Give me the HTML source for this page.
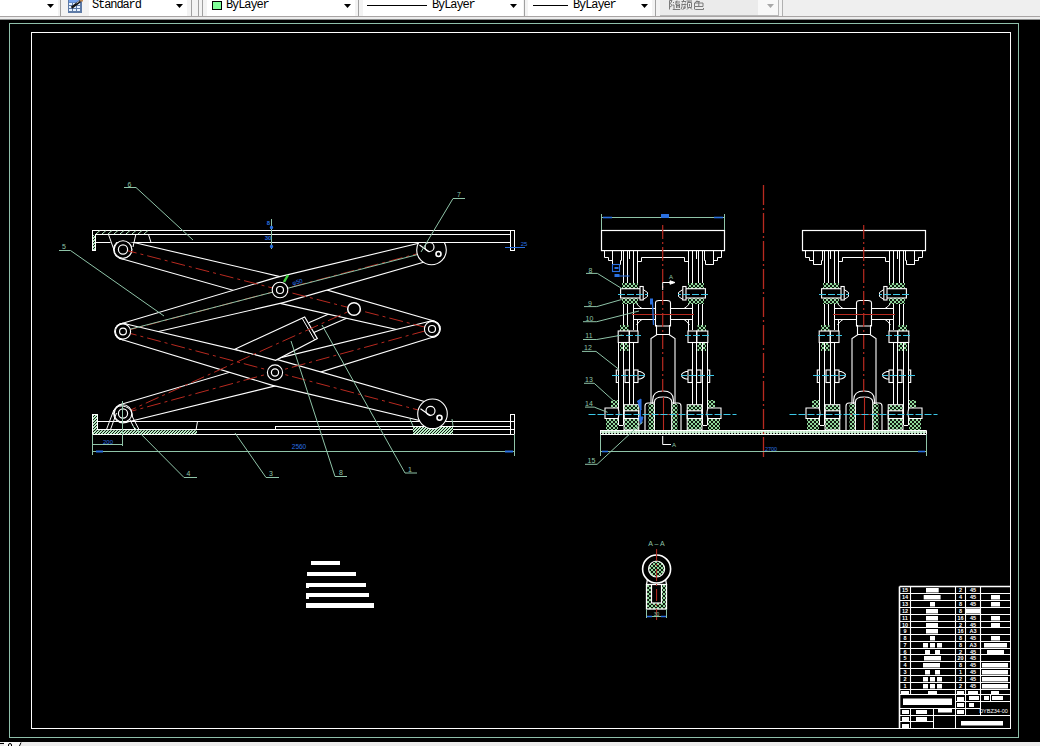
<!DOCTYPE html>
<html><head><meta charset="utf-8">
<style>
html,body{margin:0;padding:0;width:1040px;height:746px;overflow:hidden;background:#000;}
svg{position:absolute;left:0;top:0;}
</style></head><body>
<svg width="1040" height="746" viewBox="0 0 1040 746">
<defs>
<clipPath id="cpT"><rect x="0" y="243" width="1040" height="400"/></clipPath>
<pattern id="hp" width="4" height="4" patternUnits="userSpaceOnUse"><rect width="4" height="4" fill="#8fd89a"/><path d="M0,0 L4,4 M4,0 L0,4" stroke="#000" stroke-width="0.9"/></pattern>
<pattern id="hw" width="3" height="3" patternUnits="userSpaceOnUse"><rect width="3" height="3" fill="#b8ecc4"/><path d="M0,3 L3,0" stroke="#000" stroke-width="0.9"/></pattern>
<pattern id="hb" width="3" height="3" patternUnits="userSpaceOnUse"><rect width="3" height="3" fill="#d0f2d6"/><circle cx="1.5" cy="1.5" r="0.7" fill="#000"/></pattern>
<linearGradient id="tbg" x1="0" y1="0" x2="0" y2="1"><stop offset="0" stop-color="#fafafa"/><stop offset="1" stop-color="#f2f2f2"/></linearGradient>
</defs>
<rect x="0" y="0" width="1040" height="20" fill="#f3f3f3"/>
<g shape-rendering="crispEdges">
<rect x="0" y="16" width="1040" height="1" fill="#a8a4a4"/>
<rect x="0" y="17" width="1040" height="2" fill="#ececec"/>
<rect x="0" y="19" width="1040" height="1" fill="#8c8e8e"/>
<rect x="0" y="0" width="58" height="16" fill="#fff"/>
<rect x="60" y="0" width="1" height="16" fill="#a0a0a0"/>
<rect x="89" y="0" width="98" height="16" fill="#fff"/>
<rect x="191" y="0" width="1" height="16" fill="#a0a0a0"/>
<rect x="198" y="0" width="1" height="16" fill="#a0a0a0"/>
<rect x="202" y="0" width="1" height="16" fill="#a0a0a0"/>
<rect x="207" y="0" width="148" height="16" fill="#fff"/>
<rect x="358" y="0" width="1" height="16" fill="#a0a0a0"/>
<rect x="363" y="0" width="160" height="16" fill="#fff"/>
<rect x="524" y="0" width="1" height="16" fill="#a0a0a0"/>
<rect x="528" y="0" width="124" height="16" fill="#fff"/>
<rect x="655" y="0" width="1" height="16" fill="#a0a0a0"/>
<rect x="660" y="0" width="119" height="15" fill="#ebebeb"/>
<rect x="758" y="0" width="20" height="15" fill="#f8f8f8"/>
<rect x="778" y="0" width="1" height="15" fill="#b8b8b8"/>
<rect x="660" y="15" width="119" height="1" fill="#b8b8b8"/>
<rect x="782" y="0" width="1" height="16" fill="#b0b0b0"/>
<rect x="783" y="0" width="257" height="16" fill="#efefef"/>
<rect x="212" y="1" width="10" height="9" fill="#000"/>
<rect x="213" y="2" width="8" height="7" fill="#80ff99"/>
<rect x="367" y="5" width="60" height="1" fill="#000"/>
<rect x="533" y="5" width="35" height="1" fill="#000"/>
</g>
<g fill="#000">
<path d="M47,4 H54 L50.5,8 Z"/><path d="M176,4 H183 L179.5,8 Z"/><path d="M344,4 H351 L347.5,8 Z"/><path d="M510,4 H517 L513.5,8 Z"/><path d="M641,4 H648 L644.5,8 Z"/>
</g>
<path d="M767,4 H774 L770.5,8 Z" fill="#a8a8a8"/>
<g font-family="Liberation Mono, monospace" font-size="12" fill="#000" letter-spacing="-1.1">
<text x="92" y="8">Standard</text>
<text x="226" y="8">ByLayer</text>
<text x="432" y="8">ByLayer</text>
<text x="573" y="8">ByLayer</text>
</g>
<g stroke="#7a7a7a" stroke-width="1" fill="none">
<path d="M669.5,0.5 V9.5 M669.5,0.5 H672 L670.5,3.5 L672,5.5 L670,7 M673,2 L674,3 M672.5,5 H674 V8.5 L673,9.5 H680 M675,2 H680 M677,0.5 L675.5,4.5 M676.5,4 V8 M676.5,4 H679.5 V8 M676.5,5.5 H679.5 M676.5,7 H679.5"/>
<path d="M683.5,0 V1.5 M681.5,1.5 H686 M682,3.5 L682.5,2.5 M685.5,2.5 L685,3.5 M681.5,4.5 H686.5 M682,4.5 V6.5 L681,9.5 M685.5,5.5 L683.5,7 M685.5,6.5 L683,8.5 M686,7.5 L682.5,9.5 M686.5,1 H692 M689,1 L688.5,2.5 M687.5,2.5 H691.5 V7.5 H687.5 Z M689.5,4 V6.5 M688.5,8 L687,9.5 M690.5,8 L692,9.5"/>
<path d="M697,0.5 L695,3 M696,1.5 H699.5 L698.5,3 M694.5,3 H703 V6.5 H694.5 Z M698.8,3 V6.5 M694.5,6.5 V9 Q694.5,9.5 695.5,9.5 H703.5 V8"/>
</g>
<!-- icon -->
<rect x="68" y="0" width="14" height="13" fill="#5d7aa6"/>
<rect x="69" y="0" width="12" height="2.5" fill="#74a2ee"/>
<g fill="#e6f2ff">
<rect x="69" y="3" width="3" height="2"/><rect x="73" y="3" width="3" height="2"/><rect x="77" y="3" width="3" height="2"/>
<rect x="69" y="6" width="3" height="2"/><rect x="73" y="6" width="3" height="2"/><rect x="77" y="6" width="3" height="2"/>
<rect x="69" y="9" width="3" height="2"/><rect x="73" y="9" width="3" height="2"/><rect x="77" y="9" width="3" height="2"/>
</g>
<path d="M71.5,7.8 L80.5,1" stroke="#151515" stroke-width="2.4"/>
<path d="M76.5,3.2 L79.5,1" stroke="#e0e0e0" stroke-width="0.8"/>
<rect x="80" y="0" width="3" height="1.5" fill="#c08850"/>
<rect x="0" y="742" width="1040" height="4" fill="#ececec"/>
<rect x="4" y="742" width="17" height="4" fill="#fafafa"/>
<rect x="0" y="743" width="4" height="1" fill="#000"/>
<path d="M8.5,746 V745 Q8.5,743.5 10,743.5 Q11.5,743.5 11.5,745 V746" stroke="#000" stroke-width="1" fill="none"/>
<path d="M19.5,746 L21,742.5" stroke="#000" stroke-width="1"/>
<g shape-rendering="crispEdges">
<rect x="9.5" y="23.5" width="1009" height="714" fill="none" stroke="#8fbfaa" stroke-width="1"/>
<rect x="31.5" y="32.5" width="979" height="696" fill="none" stroke="#fff" stroke-width="1"/>
</g>
<line x1="308.7" y1="322.8" x2="351.7" y2="304.0" stroke="#ffffff" stroke-width="1.1" />
<line x1="313.3" y1="332.8" x2="356.3" y2="314.0" stroke="#ffffff" stroke-width="1.1" />
<polygon points="120.8,258.0 276.9,302.1 430.1,336.4 433.9,321.6 283.1,277.9 125.2,241.0" stroke="#fff" stroke-width="2.2" fill="none" stroke-linejoin="round"/>
<circle cx="123" cy="249.5" r="8.8" stroke="#fff" stroke-width="2.2" fill="none"/>
<circle cx="432" cy="329" r="7.6" stroke="#fff" stroke-width="2.2" fill="none"/>
<polygon points="120.8,258.0 276.9,302.1 430.1,336.4 433.9,321.6 283.1,277.9 125.2,241.0" fill="#000"/>
<circle cx="123" cy="249.5" r="8.8" fill="#000"/>
<circle cx="432" cy="329" r="7.6" fill="#000"/>
<polygon points="125.3,422.0 278.3,384.6 434.0,336.3 430.0,321.7 271.7,360.4 120.7,405.0" stroke="#fff" stroke-width="2.2" fill="none" stroke-linejoin="round"/>
<circle cx="123" cy="413.5" r="8.8" stroke="#fff" stroke-width="2.2" fill="none"/>
<circle cx="432" cy="329" r="7.6" stroke="#fff" stroke-width="2.2" fill="none"/>
<polygon points="125.3,422.0 278.3,384.6 434.0,336.3 430.0,321.7 271.7,360.4 120.7,405.0" fill="#000"/>
<circle cx="123" cy="413.5" r="8.8" fill="#000"/>
<circle cx="432" cy="329" r="7.6" fill="#000"/>
<polygon points="124.9,338.8 283.2,302.1 433.8,258.7 429.2,241.3 276.8,277.9 121.1,324.2" stroke="#fff" stroke-width="2.2" fill="none" stroke-linejoin="round"/>
<circle cx="123" cy="331.5" r="7.6" stroke="#fff" stroke-width="2.2" fill="none"/>
<circle cx="431.5" cy="250" r="9" stroke="#fff" stroke-width="2.2" fill="none"/>
<polygon points="124.9,338.8 283.2,302.1 433.8,258.7 429.2,241.3 276.8,277.9 121.1,324.2" fill="#000"/>
<circle cx="123" cy="331.5" r="7.6" fill="#000"/>
<circle cx="431.5" cy="250" r="9" fill="#000"/>
<polygon points="121.0,338.8 271.8,384.6 430.2,422.5 434.8,405.1 278.2,360.4 125.0,324.2" stroke="#fff" stroke-width="2.2" fill="none" stroke-linejoin="round"/>
<circle cx="123" cy="331.5" r="7.6" stroke="#fff" stroke-width="2.2" fill="none"/>
<circle cx="432.5" cy="413.8" r="9" stroke="#fff" stroke-width="2.2" fill="none"/>
<polygon points="121.0,338.8 271.8,384.6 430.2,422.5 434.8,405.1 278.2,360.4 125.0,324.2" fill="#000"/>
<circle cx="123" cy="331.5" r="7.6" fill="#000"/>
<circle cx="432.5" cy="413.8" r="9" fill="#000"/>
<line x1="123.0" y1="249.5" x2="432.0" y2="329.0" stroke="#b82a20" stroke-width="1.0" stroke-dasharray="14,4,3,4"/>
<line x1="123.0" y1="413.5" x2="432.0" y2="329.0" stroke="#b82a20" stroke-width="1.0" stroke-dasharray="14,4,3,4"/>
<line x1="123.0" y1="331.5" x2="431.5" y2="250.0" stroke="#b82a20" stroke-width="1.0" stroke-dasharray="14,4,3,4"/>
<line x1="123.0" y1="331.5" x2="432.5" y2="413.8" stroke="#b82a20" stroke-width="1.0" stroke-dasharray="14,4,3,4"/>
<line x1="129.0" y1="329.5" x2="423.5" y2="253.0" stroke="#8fc4a8" stroke-width="1" />
<polygon points="234.8,349.2 304.7,316.9 317.4,338.6 275.6,360.3" fill="#000" stroke="#fff" stroke-width="1.1"/>
<line x1="302.2" y1="318.3" x2="314.6" y2="339.8" stroke="#ffffff" stroke-width="1" />
<line x1="123.0" y1="413.5" x2="354.0" y2="309.0" stroke="#b82a20" stroke-width="1.0" stroke-dasharray="14,4,3,4"/>
<circle cx="123" cy="249.5" r="8.8" stroke="#fff" stroke-width="1.1" fill="#000"/>
<circle cx="123.0" cy="249.5" r="4.6" stroke="#ffffff" stroke-width="1.2" fill="none"/>
<circle cx="123" cy="413.5" r="8.8" stroke="#fff" stroke-width="1.1" fill="#000"/>
<circle cx="123.0" cy="413.5" r="4.6" stroke="#ffffff" stroke-width="1.2" fill="none"/>
<circle cx="280" cy="290" r="7.8" stroke="#fff" stroke-width="1.1" fill="#000"/>
<circle cx="280.0" cy="290.0" r="3.5" stroke="#ffffff" stroke-width="1.2" fill="none"/>
<circle cx="275" cy="372.5" r="7.6" stroke="#fff" stroke-width="1.1" fill="#000"/>
<circle cx="275.0" cy="372.5" r="3.6" stroke="#ffffff" stroke-width="1.2" fill="none"/>
<circle cx="123" cy="331.5" r="7.6" stroke="#fff" stroke-width="1.1" fill="#000"/>
<circle cx="123.0" cy="331.5" r="3.4" stroke="#ffffff" stroke-width="1.2" fill="none"/>
<circle cx="432" cy="329" r="7.6" stroke="#fff" stroke-width="1.1" fill="#000"/>
<circle cx="432.0" cy="329.0" r="3.5" stroke="#ffffff" stroke-width="1.2" fill="none"/>
<circle cx="354.0" cy="309.0" r="6.3" stroke="#ffffff" stroke-width="1.5" fill="#000"/>
<rect x="96.0" y="231.0" width="414.0" height="11.0" fill="#000"/>
<line x1="92.0" y1="230.5" x2="514.5" y2="230.5" stroke="#ffffff" stroke-width="1" />
<line x1="95.5" y1="234.5" x2="510.0" y2="234.5" stroke="#ffffff" stroke-width="1" />
<line x1="95.5" y1="242.5" x2="110.5" y2="242.5" stroke="#ffffff" stroke-width="1" />
<line x1="134.0" y1="242.5" x2="510.0" y2="242.5" stroke="#ffffff" stroke-width="1" />
<line x1="92.5" y1="230.0" x2="92.5" y2="250.5" stroke="#ffffff" stroke-width="1" />
<line x1="95.5" y1="234.0" x2="95.5" y2="250.5" stroke="#ffffff" stroke-width="1" />
<line x1="92.0" y1="250.5" x2="96.0" y2="250.5" stroke="#ffffff" stroke-width="1" />
<line x1="510.5" y1="230.0" x2="510.5" y2="250.5" stroke="#ffffff" stroke-width="1" />
<line x1="514.5" y1="230.0" x2="514.5" y2="250.5" stroke="#ffffff" stroke-width="1" />
<line x1="510.0" y1="250.5" x2="515.0" y2="250.5" stroke="#ffffff" stroke-width="1" />
<path d="M108.5,234.5 L114,250 M135.8,234.5 L133,247 M148.5,234.5 L151,242.5" stroke="#ffffff" stroke-width="1" fill="none" />
<line x1="96.0" y1="234.0" x2="100.0" y2="230.5" stroke="#b8ecc4" stroke-width="1" />
<line x1="102.0" y1="234.0" x2="106.0" y2="230.5" stroke="#b8ecc4" stroke-width="1" />
<line x1="108.0" y1="234.0" x2="112.0" y2="230.5" stroke="#b8ecc4" stroke-width="1" />
<line x1="114.0" y1="234.0" x2="118.0" y2="230.5" stroke="#b8ecc4" stroke-width="1" />
<line x1="120.0" y1="234.0" x2="124.0" y2="230.5" stroke="#b8ecc4" stroke-width="1" />
<line x1="126.0" y1="234.0" x2="130.0" y2="230.5" stroke="#b8ecc4" stroke-width="1" />
<line x1="132.0" y1="234.0" x2="136.0" y2="230.5" stroke="#b8ecc4" stroke-width="1" />
<line x1="138.0" y1="234.0" x2="142.0" y2="230.5" stroke="#b8ecc4" stroke-width="1" />
<line x1="144.0" y1="234.0" x2="148.0" y2="230.5" stroke="#b8ecc4" stroke-width="1" />
<rect x="93" y="235" width="2" height="15" fill="url(#hw)"/>
<circle cx="123.0" cy="249.5" r="8.8" stroke="#ffffff" stroke-width="1.1" fill="#000"/>
<circle cx="123.0" cy="249.5" r="4.6" stroke="#ffffff" stroke-width="1.2" fill="none"/>
<line x1="128.0" y1="250.8" x2="133.0" y2="252.1" stroke="#b82a20" stroke-width="1.0" />
<line x1="97.0" y1="421.5" x2="514.5" y2="421.5" stroke="#ffffff" stroke-width="1" />
<line x1="275.0" y1="426.5" x2="510.0" y2="426.5" stroke="#ffffff" stroke-width="1" />
<line x1="97.0" y1="429.5" x2="514.5" y2="429.5" stroke="#ffffff" stroke-width="1" />
<line x1="92.0" y1="434.5" x2="514.5" y2="434.5" stroke="#ffffff" stroke-width="1" />
<line x1="92.5" y1="414.0" x2="92.5" y2="434.5" stroke="#ffffff" stroke-width="1" />
<line x1="97.5" y1="414.0" x2="97.5" y2="430.0" stroke="#ffffff" stroke-width="1" />
<line x1="92.0" y1="414.5" x2="97.5" y2="414.5" stroke="#ffffff" stroke-width="1" />
<line x1="510.5" y1="414.5" x2="510.5" y2="434.5" stroke="#ffffff" stroke-width="1" />
<line x1="514.5" y1="414.5" x2="514.5" y2="434.5" stroke="#ffffff" stroke-width="1" />
<line x1="510.0" y1="414.5" x2="515.0" y2="414.5" stroke="#ffffff" stroke-width="1" />
<line x1="275.5" y1="426.5" x2="275.5" y2="430.0" stroke="#ffffff" stroke-width="1" />
<path d="M106.5,429.5 L113.8,410 A10.5,10.5 0 0 1 132.5,417 L139,429.5 M110.5,429.5 L116.5,413 M135,429.5 L129.5,419 M197.5,421.5 L196,430" stroke="#ffffff" stroke-width="1" fill="none" />
<rect x="93" y="430.2" width="104" height="3.8" fill="url(#hw)"/>
<rect x="413" y="427" width="40" height="7" fill="url(#hw)"/>
<rect x="93" y="415" width="4" height="15" fill="url(#hw)"/>
<path d="M413,426 L410,419 M453,426 L452,419" stroke="#8fc4a8" stroke-width="1" fill="none" />
<g clip-path="url(#cpT)">
<circle cx="431.5" cy="250" r="14.8" stroke="#fff" stroke-width="1.1" fill="#000"/>
</g>
<circle cx="429.5" cy="247.0" r="4.5" stroke="#ffffff" stroke-width="1.2" fill="none"/>
<circle cx="438.5" cy="254.0" r="2.5" stroke="#ffffff" stroke-width="1.6" fill="none"/>
<line x1="419.5" y1="245.0" x2="429.5" y2="252.0" stroke="#ffffff" stroke-width="1.2" />
<g>
<circle cx="432.5" cy="413.8" r="14.8" stroke="#fff" stroke-width="1.1" fill="#000"/>
</g>
<circle cx="430.5" cy="410.8" r="4.5" stroke="#ffffff" stroke-width="1.2" fill="none"/>
<circle cx="439.5" cy="417.8" r="2.5" stroke="#ffffff" stroke-width="1.6" fill="none"/>
<line x1="420.5" y1="408.8" x2="430.5" y2="415.8" stroke="#ffffff" stroke-width="1.2" />
<line x1="92.0" y1="451.5" x2="514.5" y2="451.5" stroke="#8fc4a8" stroke-width="1" />
<line x1="92.5" y1="434.5" x2="92.5" y2="455.0" stroke="#8fc4a8" stroke-width="1" />
<line x1="514.5" y1="434.5" x2="514.5" y2="456.0" stroke="#8fc4a8" stroke-width="1" />
<line x1="92.0" y1="444.5" x2="122.5" y2="444.5" stroke="#8fc4a8" stroke-width="1" />
<line x1="122.5" y1="401.0" x2="122.5" y2="446.0" stroke="#8fc4a8" stroke-width="1" />
<line x1="96.0" y1="451.5" x2="103.0" y2="451.5" stroke="#2a70e0" stroke-width="2" />
<line x1="505.0" y1="451.5" x2="513.0" y2="451.5" stroke="#2a70e0" stroke-width="2" />
<text x="299.0" y="449.0" fill="#2a70e0" font-size="6.5" text-anchor="middle" font-family="Liberation Sans, sans-serif" >2560</text>
<text x="108.0" y="443.5" fill="#2a70e0" font-size="6" text-anchor="middle" font-family="Liberation Sans, sans-serif" >200</text>
<line x1="271.5" y1="219.0" x2="271.5" y2="249.0" stroke="#8fc4a8" stroke-width="1" />
<circle cx="271.5" cy="227.5" r="1.0" stroke="#2a70e0" stroke-width="1.5" fill="#2a70e0"/>
<circle cx="271.5" cy="246.5" r="1.0" stroke="#2a70e0" stroke-width="1.5" fill="#2a70e0"/>
<text x="268.5" y="225.0" fill="#2a70e0" font-size="6" text-anchor="middle" font-family="Liberation Sans, sans-serif" font-weight="bold">8</text>
<text x="268.0" y="240.0" fill="#2a70e0" font-size="6" text-anchor="middle" font-family="Liberation Sans, sans-serif" font-weight="bold">30</text>
<line x1="505.0" y1="247.5" x2="525.0" y2="247.5" stroke="#2a70e0" stroke-width="1" />
<text x="524.0" y="246.0" fill="#2a70e0" font-size="6" text-anchor="middle" font-family="Liberation Sans, sans-serif" >25</text>
<line x1="284.0" y1="282.0" x2="288.0" y2="275.0" stroke="#40d040" stroke-width="2.5" />
<text x="298.0" y="284.0" fill="#2a70e0" font-size="6" text-anchor="middle" font-family="Liberation Sans, sans-serif" transform="rotate(-15 298 284)">φ50</text>
<path d="M193.0,240.0 L136.0,187.5 L124.0,187.5" stroke="#8fc4a8" stroke-width="1" fill="none" />
<text x="129.5" y="186.5" fill="#8fc4a8" font-size="7" text-anchor="middle" font-family="Liberation Sans, sans-serif" >6</text>
<path d="M164.0,316.0 L70.5,250.5 L59.0,250.5" stroke="#8fc4a8" stroke-width="1" fill="none" />
<text x="64.0" y="248.5" fill="#8fc4a8" font-size="7" text-anchor="middle" font-family="Liberation Sans, sans-serif" >5</text>
<path d="M421.0,252.0 L453.0,198.5 L465.0,198.5" stroke="#8fc4a8" stroke-width="1" fill="none" />
<text x="459.0" y="196.5" fill="#8fc4a8" font-size="7" text-anchor="middle" font-family="Liberation Sans, sans-serif" >7</text>
<path d="M132.0,425.0 L184.0,477.5 L197.0,477.5" stroke="#8fc4a8" stroke-width="1" fill="none" />
<text x="188.5" y="476.0" fill="#8fc4a8" font-size="7" text-anchor="middle" font-family="Liberation Sans, sans-serif" >4</text>
<path d="M235.0,433.0 L266.0,477.5 L279.0,477.5" stroke="#8fc4a8" stroke-width="1" fill="none" />
<text x="271.0" y="476.0" fill="#8fc4a8" font-size="7" text-anchor="middle" font-family="Liberation Sans, sans-serif" >3</text>
<path d="M291.0,341.0 L335.0,476.5 L347.0,476.5" stroke="#8fc4a8" stroke-width="1" fill="none" />
<text x="341.0" y="474.5" fill="#8fc4a8" font-size="7" text-anchor="middle" font-family="Liberation Sans, sans-serif" >8</text>
<path d="M322.0,325.0 L405.0,473.0 L417.0,473.0" stroke="#8fc4a8" stroke-width="1" fill="none" />
<text x="410.0" y="471.5" fill="#8fc4a8" font-size="7" text-anchor="middle" font-family="Liberation Sans, sans-serif" >1</text>
<path d="M604.5,250.5 V257.5 H608.5 V260.5 H612.5 V264.5 H620.5 V260.5 H621.5 V250.5" stroke="#ffffff" stroke-width="1" fill="none" />
<path d="M612.5,250.5 V264.5 M629.5,250.5 V259 M637.5,261.5 H641.5 V257.5 H643" stroke="#ffffff" stroke-width="1" fill="none" />
<line x1="623.5" y1="250.6" x2="623.5" y2="283.0" stroke="#ffffff" stroke-width="1" />
<line x1="627.5" y1="250.6" x2="627.5" y2="283.0" stroke="#ffffff" stroke-width="1" />
<line x1="633.5" y1="250.6" x2="633.5" y2="283.0" stroke="#ffffff" stroke-width="1" />
<line x1="637.5" y1="250.6" x2="637.5" y2="283.0" stroke="#ffffff" stroke-width="1" />
<rect x="622.0" y="283.0" width="16.0" height="21.0" fill="url(#hp)"/>
<rect x="620.6" y="288.7" width="20.5" height="9.3" fill="#000" stroke="#fff" stroke-width="1.1"/>
<rect x="640" y="286.5" width="3.2" height="13.5" fill="#000" stroke="#fff" stroke-width="1.1"/>
<path d="M643.2,289.5 L647.5,292.5 V296.5 L643.2,299.5" stroke="#ffffff" stroke-width="1" fill="none" />
<line x1="618.0" y1="294.5" x2="648.0" y2="294.5" stroke="#3cc8e8" stroke-width="1.1" stroke-dasharray="7,2"/>
<line x1="623.5" y1="304.0" x2="623.5" y2="325.0" stroke="#ffffff" stroke-width="1" />
<line x1="627.5" y1="304.0" x2="627.5" y2="325.0" stroke="#ffffff" stroke-width="1" />
<line x1="633.5" y1="304.0" x2="633.5" y2="330.0" stroke="#ffffff" stroke-width="1" />
<line x1="637.5" y1="320.0" x2="637.5" y2="343.0" stroke="#ffffff" stroke-width="1" />
<line x1="634.0" y1="308.5" x2="655.2" y2="308.5" stroke="#ffffff" stroke-width="1" />
<line x1="634.0" y1="319.5" x2="655.2" y2="319.5" stroke="#ffffff" stroke-width="1" />
<path d="M636.5,303.5 Q639,307 642,308.5 M636.5,325 Q639,321 642,319.5" stroke="#ffffff" stroke-width="1" fill="none" />
<rect x="620.0" y="325.0" width="8.5" height="26.0" fill="url(#hp)"/>
<rect x="618.2" y="331" width="11" height="11.5" fill="#000" stroke="#fff" stroke-width="1.1"/>
<rect x="629.4" y="331" width="8.6" height="11.5" fill="#000" stroke="#fff" stroke-width="1.1"/>
<line x1="617.0" y1="335.5" x2="641.0" y2="335.5" stroke="#3cc8e8" stroke-width="1.1" stroke-dasharray="7,2"/>
<line x1="618.5" y1="342.5" x2="618.5" y2="425.0" stroke="#ffffff" stroke-width="1" />
<line x1="623.5" y1="342.5" x2="623.5" y2="425.0" stroke="#ffffff" stroke-width="1" />
<line x1="618.8" y1="425.5" x2="623.1" y2="425.5" stroke="#ffffff" stroke-width="1" />
<line x1="629.5" y1="342.5" x2="629.5" y2="404.5" stroke="#ffffff" stroke-width="1" />
<line x1="633.5" y1="342.5" x2="633.5" y2="404.5" stroke="#ffffff" stroke-width="1" />
<path d="M618.8,370 H616.3 V382.5 H618.8" stroke="#ffffff" stroke-width="1.1" fill="none" />
<rect x="625.0" y="370.0" width="4.4" height="12.5" stroke="#ffffff" stroke-width="1.1" fill="none"/>
<rect x="633.8" y="370.0" width="4.2" height="12.5" stroke="#ffffff" stroke-width="1.1" fill="none"/>
<path d="M638,371.5 H640 Q644.5,373 644.5,375.3 Q644.5,377.6 640,379 H638" stroke="#ffffff" stroke-width="1.1" fill="none" />
<line x1="612.0" y1="375.5" x2="645.0" y2="375.5" stroke="#3cc8e8" stroke-width="1.1" stroke-dasharray="7,2"/>
<rect x="611.0" y="400.0" width="7.0" height="8.0" fill="url(#hp)"/>
<rect x="606.0" y="418.5" width="12.0" height="11.5" fill="url(#hp)"/>
<path d="M605,408 H618 Q620,413 618,418.5 H605 Z" fill="#000" stroke="#fff" stroke-width="1.1"/>
<rect x="624.0" y="404.7" width="14.8" height="25.3" fill="url(#hp)"/>
<rect x="624" y="410.8" width="14.8" height="7.7" fill="#000" stroke="#fff" stroke-width="1.1"/>
<rect x="624.0" y="404.7" width="14.8" height="25.3" stroke="#ffffff" stroke-width="1" fill="none"/>
<rect x="648.5" y="404.0" width="6.0" height="26.0" fill="url(#hp)"/>
<path d="M645,430 V406 Q645,403 648,403 H654.4" stroke="#ffffff" stroke-width="1.1" fill="none" />
<g transform="translate(1326,0) scale(-1,1)"><path d="M604.5,250.5 V257.5 H608.5 V260.5 H612.5 V264.5 H620.5 V260.5 H621.5 V250.5" stroke="#ffffff" stroke-width="1" fill="none" />
<path d="M612.5,250.5 V264.5 M629.5,250.5 V259 M637.5,261.5 H641.5 V257.5 H643" stroke="#ffffff" stroke-width="1" fill="none" />
<line x1="623.5" y1="250.6" x2="623.5" y2="283.0" stroke="#ffffff" stroke-width="1" />
<line x1="627.5" y1="250.6" x2="627.5" y2="283.0" stroke="#ffffff" stroke-width="1" />
<line x1="633.5" y1="250.6" x2="633.5" y2="283.0" stroke="#ffffff" stroke-width="1" />
<line x1="637.5" y1="250.6" x2="637.5" y2="283.0" stroke="#ffffff" stroke-width="1" />
<rect x="622.0" y="283.0" width="16.0" height="21.0" fill="url(#hp)"/>
<rect x="620.6" y="288.7" width="20.5" height="9.3" fill="#000" stroke="#fff" stroke-width="1.1"/>
<rect x="640" y="286.5" width="3.2" height="13.5" fill="#000" stroke="#fff" stroke-width="1.1"/>
<path d="M643.2,289.5 L647.5,292.5 V296.5 L643.2,299.5" stroke="#ffffff" stroke-width="1" fill="none" />
<line x1="618.0" y1="294.5" x2="648.0" y2="294.5" stroke="#3cc8e8" stroke-width="1.1" stroke-dasharray="7,2"/>
<line x1="623.5" y1="304.0" x2="623.5" y2="325.0" stroke="#ffffff" stroke-width="1" />
<line x1="627.5" y1="304.0" x2="627.5" y2="325.0" stroke="#ffffff" stroke-width="1" />
<line x1="633.5" y1="304.0" x2="633.5" y2="330.0" stroke="#ffffff" stroke-width="1" />
<line x1="637.5" y1="320.0" x2="637.5" y2="343.0" stroke="#ffffff" stroke-width="1" />
<line x1="634.0" y1="308.5" x2="655.2" y2="308.5" stroke="#ffffff" stroke-width="1" />
<line x1="634.0" y1="319.5" x2="655.2" y2="319.5" stroke="#ffffff" stroke-width="1" />
<path d="M636.5,303.5 Q639,307 642,308.5 M636.5,325 Q639,321 642,319.5" stroke="#ffffff" stroke-width="1" fill="none" />
<rect x="620.0" y="325.0" width="8.5" height="26.0" fill="url(#hp)"/>
<rect x="618.2" y="331" width="11" height="11.5" fill="#000" stroke="#fff" stroke-width="1.1"/>
<rect x="629.4" y="331" width="8.6" height="11.5" fill="#000" stroke="#fff" stroke-width="1.1"/>
<line x1="617.0" y1="335.5" x2="641.0" y2="335.5" stroke="#3cc8e8" stroke-width="1.1" stroke-dasharray="7,2"/>
<line x1="618.5" y1="342.5" x2="618.5" y2="425.0" stroke="#ffffff" stroke-width="1" />
<line x1="623.5" y1="342.5" x2="623.5" y2="425.0" stroke="#ffffff" stroke-width="1" />
<line x1="618.8" y1="425.5" x2="623.1" y2="425.5" stroke="#ffffff" stroke-width="1" />
<line x1="629.5" y1="342.5" x2="629.5" y2="404.5" stroke="#ffffff" stroke-width="1" />
<line x1="633.5" y1="342.5" x2="633.5" y2="404.5" stroke="#ffffff" stroke-width="1" />
<path d="M618.8,370 H616.3 V382.5 H618.8" stroke="#ffffff" stroke-width="1.1" fill="none" />
<rect x="625.0" y="370.0" width="4.4" height="12.5" stroke="#ffffff" stroke-width="1.1" fill="none"/>
<rect x="633.8" y="370.0" width="4.2" height="12.5" stroke="#ffffff" stroke-width="1.1" fill="none"/>
<path d="M638,371.5 H640 Q644.5,373 644.5,375.3 Q644.5,377.6 640,379 H638" stroke="#ffffff" stroke-width="1.1" fill="none" />
<line x1="612.0" y1="375.5" x2="645.0" y2="375.5" stroke="#3cc8e8" stroke-width="1.1" stroke-dasharray="7,2"/>
<rect x="611.0" y="400.0" width="7.0" height="8.0" fill="url(#hp)"/>
<rect x="606.0" y="418.5" width="12.0" height="11.5" fill="url(#hp)"/>
<path d="M605,408 H618 Q620,413 618,418.5 H605 Z" fill="#000" stroke="#fff" stroke-width="1.1"/>
<rect x="624.0" y="404.7" width="14.8" height="25.3" fill="url(#hp)"/>
<rect x="624" y="410.8" width="14.8" height="7.7" fill="#000" stroke="#fff" stroke-width="1.1"/>
<rect x="624.0" y="404.7" width="14.8" height="25.3" stroke="#ffffff" stroke-width="1" fill="none"/>
<rect x="648.5" y="404.0" width="6.0" height="26.0" fill="url(#hp)"/>
<path d="M645,430 V406 Q645,403 648,403 H654.4" stroke="#ffffff" stroke-width="1.1" fill="none" /></g>
<rect x="601.5" y="230.5" width="123.0" height="20.1" stroke="#ffffff" stroke-width="1.2" fill="none"/>
<line x1="643.0" y1="257.5" x2="683.0" y2="257.5" stroke="#ffffff" stroke-width="1" />
<path d="M655.5,326 V303 Q655.5,300.5 659,300.5 H667 Q670.5,300.5 670.5,303 V326 Z" stroke="#ffffff" stroke-width="1.1" fill="none" />
<path d="M656.5,325 V335 M669.5,325 V335" stroke="#ffffff" stroke-width="1.1" fill="none" />
<path d="M651,404 V338.5 L657,334.5 H669 L675,338.5 V404" stroke="#ffffff" stroke-width="1.1" fill="none" />
<path d="M652.7,404 V400 Q652.7,391 663,391 Q673.4,391 673.4,400 V404" stroke="#ffffff" stroke-width="1.1" fill="none" />
<path d="M654.4,431 V402 Q654.4,397 663,397 Q671.7,397 671.7,402 V431" fill="#000" stroke="#fff" stroke-width="1.1"/>
<line x1="645.7" y1="414.5" x2="682.0" y2="414.5" stroke="#b82a20" stroke-width="1.2" />
<line x1="663.5" y1="397.0" x2="663.5" y2="431.0" stroke="#b82a20" stroke-width="1.1" />
<line x1="632.0" y1="314.5" x2="694.0" y2="314.5" stroke="#b82a20" stroke-width="1.2" />
<line x1="588.5" y1="414.5" x2="736.5" y2="414.5" stroke="#3cc8e8" stroke-width="1.0" stroke-dasharray="7,2"/>
<line x1="662.7" y1="225" x2="662.7" y2="392" stroke="#b82a20" stroke-width="1.2" stroke-dasharray="14,3,2,3"/>
<g transform="translate(201,0)"><path d="M604.5,250.5 V257.5 H608.5 V260.5 H612.5 V264.5 H620.5 V260.5 H621.5 V250.5" stroke="#ffffff" stroke-width="1" fill="none" />
<path d="M612.5,250.5 V264.5 M629.5,250.5 V259 M637.5,261.5 H641.5 V257.5 H643" stroke="#ffffff" stroke-width="1" fill="none" />
<line x1="623.5" y1="250.6" x2="623.5" y2="283.0" stroke="#ffffff" stroke-width="1" />
<line x1="627.5" y1="250.6" x2="627.5" y2="283.0" stroke="#ffffff" stroke-width="1" />
<line x1="633.5" y1="250.6" x2="633.5" y2="283.0" stroke="#ffffff" stroke-width="1" />
<line x1="637.5" y1="250.6" x2="637.5" y2="283.0" stroke="#ffffff" stroke-width="1" />
<rect x="622.0" y="283.0" width="16.0" height="21.0" fill="url(#hp)"/>
<rect x="620.6" y="288.7" width="20.5" height="9.3" fill="#000" stroke="#fff" stroke-width="1.1"/>
<rect x="640" y="286.5" width="3.2" height="13.5" fill="#000" stroke="#fff" stroke-width="1.1"/>
<path d="M643.2,289.5 L647.5,292.5 V296.5 L643.2,299.5" stroke="#ffffff" stroke-width="1" fill="none" />
<line x1="618.0" y1="294.5" x2="648.0" y2="294.5" stroke="#3cc8e8" stroke-width="1.1" stroke-dasharray="7,2"/>
<line x1="623.5" y1="304.0" x2="623.5" y2="325.0" stroke="#ffffff" stroke-width="1" />
<line x1="627.5" y1="304.0" x2="627.5" y2="325.0" stroke="#ffffff" stroke-width="1" />
<line x1="633.5" y1="304.0" x2="633.5" y2="330.0" stroke="#ffffff" stroke-width="1" />
<line x1="637.5" y1="320.0" x2="637.5" y2="343.0" stroke="#ffffff" stroke-width="1" />
<line x1="634.0" y1="308.5" x2="655.2" y2="308.5" stroke="#ffffff" stroke-width="1" />
<line x1="634.0" y1="319.5" x2="655.2" y2="319.5" stroke="#ffffff" stroke-width="1" />
<path d="M636.5,303.5 Q639,307 642,308.5 M636.5,325 Q639,321 642,319.5" stroke="#ffffff" stroke-width="1" fill="none" />
<rect x="620.0" y="325.0" width="8.5" height="26.0" fill="url(#hp)"/>
<rect x="618.2" y="331" width="11" height="11.5" fill="#000" stroke="#fff" stroke-width="1.1"/>
<rect x="629.4" y="331" width="8.6" height="11.5" fill="#000" stroke="#fff" stroke-width="1.1"/>
<line x1="617.0" y1="335.5" x2="641.0" y2="335.5" stroke="#3cc8e8" stroke-width="1.1" stroke-dasharray="7,2"/>
<line x1="618.5" y1="342.5" x2="618.5" y2="425.0" stroke="#ffffff" stroke-width="1" />
<line x1="623.5" y1="342.5" x2="623.5" y2="425.0" stroke="#ffffff" stroke-width="1" />
<line x1="618.8" y1="425.5" x2="623.1" y2="425.5" stroke="#ffffff" stroke-width="1" />
<line x1="629.5" y1="342.5" x2="629.5" y2="404.5" stroke="#ffffff" stroke-width="1" />
<line x1="633.5" y1="342.5" x2="633.5" y2="404.5" stroke="#ffffff" stroke-width="1" />
<path d="M618.8,370 H616.3 V382.5 H618.8" stroke="#ffffff" stroke-width="1.1" fill="none" />
<rect x="625.0" y="370.0" width="4.4" height="12.5" stroke="#ffffff" stroke-width="1.1" fill="none"/>
<rect x="633.8" y="370.0" width="4.2" height="12.5" stroke="#ffffff" stroke-width="1.1" fill="none"/>
<path d="M638,371.5 H640 Q644.5,373 644.5,375.3 Q644.5,377.6 640,379 H638" stroke="#ffffff" stroke-width="1.1" fill="none" />
<line x1="612.0" y1="375.5" x2="645.0" y2="375.5" stroke="#3cc8e8" stroke-width="1.1" stroke-dasharray="7,2"/>
<rect x="611.0" y="400.0" width="7.0" height="8.0" fill="url(#hp)"/>
<rect x="606.0" y="418.5" width="12.0" height="11.5" fill="url(#hp)"/>
<path d="M605,408 H618 Q620,413 618,418.5 H605 Z" fill="#000" stroke="#fff" stroke-width="1.1"/>
<rect x="624.0" y="404.7" width="14.8" height="25.3" fill="url(#hp)"/>
<rect x="624" y="410.8" width="14.8" height="7.7" fill="#000" stroke="#fff" stroke-width="1.1"/>
<rect x="624.0" y="404.7" width="14.8" height="25.3" stroke="#ffffff" stroke-width="1" fill="none"/>
<rect x="648.5" y="404.0" width="6.0" height="26.0" fill="url(#hp)"/>
<path d="M645,430 V406 Q645,403 648,403 H654.4" stroke="#ffffff" stroke-width="1.1" fill="none" />
<g transform="translate(1326,0) scale(-1,1)"><path d="M604.5,250.5 V257.5 H608.5 V260.5 H612.5 V264.5 H620.5 V260.5 H621.5 V250.5" stroke="#ffffff" stroke-width="1" fill="none" />
<path d="M612.5,250.5 V264.5 M629.5,250.5 V259 M637.5,261.5 H641.5 V257.5 H643" stroke="#ffffff" stroke-width="1" fill="none" />
<line x1="623.5" y1="250.6" x2="623.5" y2="283.0" stroke="#ffffff" stroke-width="1" />
<line x1="627.5" y1="250.6" x2="627.5" y2="283.0" stroke="#ffffff" stroke-width="1" />
<line x1="633.5" y1="250.6" x2="633.5" y2="283.0" stroke="#ffffff" stroke-width="1" />
<line x1="637.5" y1="250.6" x2="637.5" y2="283.0" stroke="#ffffff" stroke-width="1" />
<rect x="622.0" y="283.0" width="16.0" height="21.0" fill="url(#hp)"/>
<rect x="620.6" y="288.7" width="20.5" height="9.3" fill="#000" stroke="#fff" stroke-width="1.1"/>
<rect x="640" y="286.5" width="3.2" height="13.5" fill="#000" stroke="#fff" stroke-width="1.1"/>
<path d="M643.2,289.5 L647.5,292.5 V296.5 L643.2,299.5" stroke="#ffffff" stroke-width="1" fill="none" />
<line x1="618.0" y1="294.5" x2="648.0" y2="294.5" stroke="#3cc8e8" stroke-width="1.1" stroke-dasharray="7,2"/>
<line x1="623.5" y1="304.0" x2="623.5" y2="325.0" stroke="#ffffff" stroke-width="1" />
<line x1="627.5" y1="304.0" x2="627.5" y2="325.0" stroke="#ffffff" stroke-width="1" />
<line x1="633.5" y1="304.0" x2="633.5" y2="330.0" stroke="#ffffff" stroke-width="1" />
<line x1="637.5" y1="320.0" x2="637.5" y2="343.0" stroke="#ffffff" stroke-width="1" />
<line x1="634.0" y1="308.5" x2="655.2" y2="308.5" stroke="#ffffff" stroke-width="1" />
<line x1="634.0" y1="319.5" x2="655.2" y2="319.5" stroke="#ffffff" stroke-width="1" />
<path d="M636.5,303.5 Q639,307 642,308.5 M636.5,325 Q639,321 642,319.5" stroke="#ffffff" stroke-width="1" fill="none" />
<rect x="620.0" y="325.0" width="8.5" height="26.0" fill="url(#hp)"/>
<rect x="618.2" y="331" width="11" height="11.5" fill="#000" stroke="#fff" stroke-width="1.1"/>
<rect x="629.4" y="331" width="8.6" height="11.5" fill="#000" stroke="#fff" stroke-width="1.1"/>
<line x1="617.0" y1="335.5" x2="641.0" y2="335.5" stroke="#3cc8e8" stroke-width="1.1" stroke-dasharray="7,2"/>
<line x1="618.5" y1="342.5" x2="618.5" y2="425.0" stroke="#ffffff" stroke-width="1" />
<line x1="623.5" y1="342.5" x2="623.5" y2="425.0" stroke="#ffffff" stroke-width="1" />
<line x1="618.8" y1="425.5" x2="623.1" y2="425.5" stroke="#ffffff" stroke-width="1" />
<line x1="629.5" y1="342.5" x2="629.5" y2="404.5" stroke="#ffffff" stroke-width="1" />
<line x1="633.5" y1="342.5" x2="633.5" y2="404.5" stroke="#ffffff" stroke-width="1" />
<path d="M618.8,370 H616.3 V382.5 H618.8" stroke="#ffffff" stroke-width="1.1" fill="none" />
<rect x="625.0" y="370.0" width="4.4" height="12.5" stroke="#ffffff" stroke-width="1.1" fill="none"/>
<rect x="633.8" y="370.0" width="4.2" height="12.5" stroke="#ffffff" stroke-width="1.1" fill="none"/>
<path d="M638,371.5 H640 Q644.5,373 644.5,375.3 Q644.5,377.6 640,379 H638" stroke="#ffffff" stroke-width="1.1" fill="none" />
<line x1="612.0" y1="375.5" x2="645.0" y2="375.5" stroke="#3cc8e8" stroke-width="1.1" stroke-dasharray="7,2"/>
<rect x="611.0" y="400.0" width="7.0" height="8.0" fill="url(#hp)"/>
<rect x="606.0" y="418.5" width="12.0" height="11.5" fill="url(#hp)"/>
<path d="M605,408 H618 Q620,413 618,418.5 H605 Z" fill="#000" stroke="#fff" stroke-width="1.1"/>
<rect x="624.0" y="404.7" width="14.8" height="25.3" fill="url(#hp)"/>
<rect x="624" y="410.8" width="14.8" height="7.7" fill="#000" stroke="#fff" stroke-width="1.1"/>
<rect x="624.0" y="404.7" width="14.8" height="25.3" stroke="#ffffff" stroke-width="1" fill="none"/>
<rect x="648.5" y="404.0" width="6.0" height="26.0" fill="url(#hp)"/>
<path d="M645,430 V406 Q645,403 648,403 H654.4" stroke="#ffffff" stroke-width="1.1" fill="none" /></g>
<rect x="601.5" y="230.5" width="123.0" height="20.1" stroke="#ffffff" stroke-width="1.2" fill="none"/>
<line x1="643.0" y1="257.5" x2="683.0" y2="257.5" stroke="#ffffff" stroke-width="1" />
<path d="M655.5,326 V303 Q655.5,300.5 659,300.5 H667 Q670.5,300.5 670.5,303 V326 Z" stroke="#ffffff" stroke-width="1.1" fill="none" />
<path d="M656.5,325 V335 M669.5,325 V335" stroke="#ffffff" stroke-width="1.1" fill="none" />
<path d="M651,404 V338.5 L657,334.5 H669 L675,338.5 V404" stroke="#ffffff" stroke-width="1.1" fill="none" />
<path d="M652.7,404 V400 Q652.7,391 663,391 Q673.4,391 673.4,400 V404" stroke="#ffffff" stroke-width="1.1" fill="none" />
<path d="M654.4,431 V402 Q654.4,397 663,397 Q671.7,397 671.7,402 V431" fill="#000" stroke="#fff" stroke-width="1.1"/>
<line x1="645.7" y1="414.5" x2="682.0" y2="414.5" stroke="#b82a20" stroke-width="1.2" />
<line x1="663.5" y1="397.0" x2="663.5" y2="431.0" stroke="#b82a20" stroke-width="1.1" />
<line x1="632.0" y1="314.5" x2="694.0" y2="314.5" stroke="#b82a20" stroke-width="1.2" />
<line x1="588.5" y1="414.5" x2="736.5" y2="414.5" stroke="#3cc8e8" stroke-width="1.0" stroke-dasharray="7,2"/>
<line x1="662.7" y1="225" x2="662.7" y2="392" stroke="#b82a20" stroke-width="1.2" stroke-dasharray="14,3,2,3"/></g>
<line x1="600.0" y1="430.5" x2="926.5" y2="430.5" stroke="#ffffff" stroke-width="1" />
<line x1="600.0" y1="434.5" x2="926.5" y2="434.5" stroke="#ffffff" stroke-width="1" />
<line x1="600.5" y1="430.5" x2="600.5" y2="434.5" stroke="#ffffff" stroke-width="1" />
<line x1="926.5" y1="430.5" x2="926.5" y2="434.5" stroke="#ffffff" stroke-width="1" />
<rect x="601" y="431" width="325" height="3" fill="url(#hb)"/>
<line x1="763.5" y1="185" x2="763.5" y2="460" stroke="#b82a20" stroke-width="1.3" stroke-dasharray="20,3,2,3"/>
<line x1="601.5" y1="217.5" x2="724.5" y2="217.5" stroke="#8fc4a8" stroke-width="1" />
<line x1="601.5" y1="214.0" x2="601.5" y2="230.0" stroke="#8fc4a8" stroke-width="1" />
<line x1="724.5" y1="214.0" x2="724.5" y2="230.0" stroke="#8fc4a8" stroke-width="1" />
<line x1="603.0" y1="217.5" x2="612.0" y2="217.5" stroke="#2a70e0" stroke-width="1.6" />
<line x1="714.0" y1="217.5" x2="723.0" y2="217.5" stroke="#2a70e0" stroke-width="1.6" />
<rect x="661.0" y="214.0" width="8.0" height="4.0" fill="#2a70e0"/>
<line x1="600.0" y1="451.5" x2="926.5" y2="451.5" stroke="#8fc4a8" stroke-width="1" />
<line x1="600.5" y1="434.5" x2="600.5" y2="456.0" stroke="#8fc4a8" stroke-width="1" />
<line x1="926.5" y1="434.5" x2="926.5" y2="456.0" stroke="#8fc4a8" stroke-width="1" />
<line x1="602.0" y1="451.5" x2="608.0" y2="451.5" stroke="#2a70e0" stroke-width="1.6" />
<line x1="918.0" y1="451.5" x2="925.0" y2="451.5" stroke="#2a70e0" stroke-width="1.6" />
<text x="771.0" y="451.0" fill="#2a70e0" font-size="5.5" text-anchor="middle" font-family="Liberation Sans, sans-serif" >2700</text>
<path d="M662.7,290 V282.5 H672" stroke="#ffffff" stroke-width="1" fill="none" />
<path d="M670,280.8 L675,282.5 L670,284.2 Z" stroke="#ffffff" stroke-width="1" fill="#ffffff" />
<text x="671.0" y="279.0" fill="#8fc4a8" font-size="6" text-anchor="middle" font-family="Liberation Sans, sans-serif" >A</text>
<path d="M662.7,436 V444.5 H671" stroke="#ffffff" stroke-width="1" fill="none" />
<text x="674.0" y="447.0" fill="#8fc4a8" font-size="6" text-anchor="middle" font-family="Liberation Sans, sans-serif" >A</text>
<rect x="612.5" y="264.5" width="7.0" height="7.0" stroke="#2a70e0" stroke-width="1.1" fill="none"/>
<rect x="614.5" y="267.0" width="4.0" height="2.0" fill="#2a70e0"/>
<rect x="614.5" y="274.0" width="5.0" height="3.0" fill="#2a70e0"/>
<line x1="619.0" y1="276.0" x2="629.6" y2="276.0" stroke="#2a70e0" stroke-width="1" />
<line x1="652.5" y1="302.0" x2="653.5" y2="325.0" stroke="#2a70e0" stroke-width="1.3" />
<rect x="650.0" y="298.5" width="3.0" height="6.0" fill="#2a70e0"/>
<line x1="640.5" y1="400.0" x2="640.5" y2="424.0" stroke="#2a70e0" stroke-width="1.1" />
<path d="M637.5,401 L641,399 L641,410 Z" stroke="#2a70e0" stroke-width="1" fill="#2a70e0" />
<path d="M639,417 L641,424 L643,417 Z" stroke="#2a70e0" stroke-width="1" fill="#2a70e0" />
<path d="M622.2,288.8 L597.4,273.4 L586.0,273.4" stroke="#8fc4a8" stroke-width="1" fill="none" />
<text x="590.5" y="273.0" fill="#8fc4a8" font-size="7" text-anchor="middle" font-family="Liberation Sans, sans-serif" >8</text>
<path d="M621.6,299.5 L596.8,306.6 L584.0,306.6" stroke="#8fc4a8" stroke-width="1" fill="none" />
<text x="590.0" y="306.0" fill="#8fc4a8" font-size="7" text-anchor="middle" font-family="Liberation Sans, sans-serif" >9</text>
<path d="M639.0,311.0 L596.8,321.7 L583.0,321.7" stroke="#8fc4a8" stroke-width="1" fill="none" />
<text x="589.5" y="320.5" fill="#8fc4a8" font-size="7" text-anchor="middle" font-family="Liberation Sans, sans-serif" >10</text>
<path d="M622.2,335.0 L596.8,339.5 L583.0,339.5" stroke="#8fc4a8" stroke-width="1" fill="none" />
<text x="589.0" y="338.0" fill="#8fc4a8" font-size="7" text-anchor="middle" font-family="Liberation Sans, sans-serif" >11</text>
<path d="M619.2,369.6 L596.0,351.4 L582.0,351.4" stroke="#8fc4a8" stroke-width="1" fill="none" />
<text x="588.0" y="350.0" fill="#8fc4a8" font-size="7" text-anchor="middle" font-family="Liberation Sans, sans-serif" >12</text>
<path d="M613.3,400.5 L594.2,383.3 L584.0,383.3" stroke="#8fc4a8" stroke-width="1" fill="none" />
<text x="589.0" y="382.0" fill="#8fc4a8" font-size="7" text-anchor="middle" font-family="Liberation Sans, sans-serif" >13</text>
<path d="M607.5,412.3 L594.2,407.1 L585.0,407.1" stroke="#8fc4a8" stroke-width="1" fill="none" />
<text x="589.0" y="405.5" fill="#8fc4a8" font-size="7" text-anchor="middle" font-family="Liberation Sans, sans-serif" >14</text>
<path d="M642.8,421.9 L597.1,464.3 L585.0,464.3" stroke="#8fc4a8" stroke-width="1" fill="none" />
<text x="591.5" y="463.0" fill="#8fc4a8" font-size="7" text-anchor="middle" font-family="Liberation Sans, sans-serif" >15</text>

<text x="656.5" y="546.0" fill="#8fc4a8" font-size="7" text-anchor="middle" font-family="Liberation Sans, sans-serif" >A – A</text>
<rect x="646.5" y="584.5" width="20" height="24.5" fill="url(#hp)"/>
<path d="M646.5,584.5 L647.5,579 M666.5,584.5 L665.5,579" stroke="#ffffff" stroke-width="1.3" fill="none" />
<circle cx="656.6" cy="569.0" r="14.0" stroke="#ffffff" stroke-width="1.6" fill="#000"/>
<circle cx="656.6" cy="569" r="8" fill="url(#hp)" stroke="#fff" stroke-width="1.2"/>
<rect x="646.5" y="584.5" width="20.0" height="24.5" stroke="#ffffff" stroke-width="1.3" fill="none"/>
<rect x="651.5" y="584.5" width="10" height="18.5" fill="#000" stroke="#fff" stroke-width="1.2"/>
<line x1="656.6" y1="549" x2="656.6" y2="620" stroke="#b82a20" stroke-width="1" stroke-dasharray="12,3,2,3"/>
<line x1="646.0" y1="616.5" x2="667.0" y2="616.5" stroke="#8fc4a8" stroke-width="1" />
<line x1="646.5" y1="609.0" x2="646.5" y2="618.0" stroke="#8fc4a8" stroke-width="1" />
<line x1="666.5" y1="609.0" x2="666.5" y2="618.0" stroke="#8fc4a8" stroke-width="1" />
<line x1="647.0" y1="616.5" x2="652.0" y2="616.5" stroke="#2a70e0" stroke-width="1.5" />
<line x1="661.0" y1="616.5" x2="666.0" y2="616.5" stroke="#2a70e0" stroke-width="1.5" />
<text x="656.5" y="615.5" fill="#8fc4a8" font-size="5" text-anchor="middle" font-family="Liberation Sans, sans-serif" >30</text>
<rect x="311.0" y="561.0" width="29.0" height="4.0" fill="#ffffff"/>
<rect x="307.0" y="572.0" width="49.0" height="4.0" fill="#ffffff"/>
<rect x="306.0" y="583.0" width="60.0" height="4.0" fill="#ffffff"/>
<rect x="306.0" y="586.0" width="3.0" height="2.0" fill="#ffffff"/>
<rect x="306.0" y="593.0" width="63.0" height="4.0" fill="#ffffff"/>
<rect x="306.0" y="596.0" width="3.0" height="3.0" fill="#ffffff"/>
<rect x="306.0" y="603.0" width="68.0" height="5.0" fill="#ffffff"/>
<line x1="899.5" y1="586.5" x2="1010.0" y2="586.5" stroke="#ffffff" stroke-width="1.3" />
<line x1="899.5" y1="586.5" x2="899.5" y2="728.5" stroke="#ffffff" stroke-width="1.6" />
<line x1="899.5" y1="593.5" x2="1010.0" y2="593.5" stroke="#ffffff" stroke-width="1.0" />
<line x1="899.5" y1="600.5" x2="1010.0" y2="600.5" stroke="#ffffff" stroke-width="1.0" />
<line x1="899.5" y1="607.5" x2="1010.0" y2="607.5" stroke="#ffffff" stroke-width="1.0" />
<line x1="899.5" y1="614.5" x2="1010.0" y2="614.5" stroke="#ffffff" stroke-width="1.0" />
<line x1="899.5" y1="621.5" x2="1010.0" y2="621.5" stroke="#ffffff" stroke-width="1.0" />
<line x1="899.5" y1="627.5" x2="1010.0" y2="627.5" stroke="#ffffff" stroke-width="1.0" />
<line x1="899.5" y1="634.5" x2="1010.0" y2="634.5" stroke="#ffffff" stroke-width="1.0" />
<line x1="899.5" y1="641.5" x2="1010.0" y2="641.5" stroke="#ffffff" stroke-width="1.0" />
<line x1="899.5" y1="648.5" x2="1010.0" y2="648.5" stroke="#ffffff" stroke-width="1.0" />
<line x1="899.5" y1="654.5" x2="1010.0" y2="654.5" stroke="#ffffff" stroke-width="1.0" />
<line x1="899.5" y1="661.5" x2="1010.0" y2="661.5" stroke="#ffffff" stroke-width="1.0" />
<line x1="899.5" y1="668.5" x2="1010.0" y2="668.5" stroke="#ffffff" stroke-width="1.0" />
<line x1="899.5" y1="675.5" x2="1010.0" y2="675.5" stroke="#ffffff" stroke-width="1.0" />
<line x1="899.5" y1="682.5" x2="1010.0" y2="682.5" stroke="#ffffff" stroke-width="1.0" />
<line x1="899.5" y1="689.5" x2="1010.0" y2="689.5" stroke="#ffffff" stroke-width="1.0" />
<line x1="899.5" y1="694.5" x2="1010.0" y2="694.5" stroke="#ffffff" stroke-width="1.0" />
<line x1="910.5" y1="586.5" x2="910.5" y2="694.5" stroke="#ffffff" stroke-width="1.1" />
<line x1="955.5" y1="586.5" x2="955.5" y2="694.5" stroke="#ffffff" stroke-width="1.1" />
<line x1="965.5" y1="586.5" x2="965.5" y2="694.5" stroke="#ffffff" stroke-width="1.1" />
<line x1="980.5" y1="586.5" x2="980.5" y2="694.5" stroke="#ffffff" stroke-width="1.1" />
<line x1="899.5" y1="708.5" x2="955.5" y2="708.5" stroke="#ffffff" stroke-width="1" />
<line x1="899.5" y1="715.5" x2="955.5" y2="715.5" stroke="#ffffff" stroke-width="1" />
<line x1="899.5" y1="721.5" x2="933.5" y2="721.5" stroke="#ffffff" stroke-width="1" />
<line x1="955.5" y1="701.5" x2="980.5" y2="701.5" stroke="#ffffff" stroke-width="1" />
<line x1="955.5" y1="708.5" x2="980.5" y2="708.5" stroke="#ffffff" stroke-width="1" />
<line x1="955.5" y1="715.5" x2="1010.0" y2="715.5" stroke="#ffffff" stroke-width="1" />
<line x1="980.5" y1="701.5" x2="1010.0" y2="701.5" stroke="#ffffff" stroke-width="1" />
<line x1="910.5" y1="708.5" x2="910.5" y2="728.5" stroke="#ffffff" stroke-width="1" />
<line x1="933.5" y1="708.5" x2="933.5" y2="728.5" stroke="#ffffff" stroke-width="1" />
<line x1="955.5" y1="694.5" x2="955.5" y2="728.5" stroke="#ffffff" stroke-width="1" />
<line x1="965.5" y1="694.5" x2="965.5" y2="715.5" stroke="#ffffff" stroke-width="1" />
<line x1="980.5" y1="694.5" x2="980.5" y2="715.5" stroke="#ffffff" stroke-width="1" />
<line x1="990.5" y1="694.5" x2="990.5" y2="701.5" stroke="#ffffff" stroke-width="1" />
<rect x="903.0" y="698.5" width="49.0" height="6.5" fill="#ffffff"/>
<rect x="938.0" y="708.5" width="14.0" height="4.0" fill="#ffffff"/>
<rect x="961.0" y="721.0" width="42.0" height="4.5" fill="#ffffff"/>
<text x="993.5" y="713.0" fill="#ffffff" font-size="5.5" text-anchor="middle" font-family="Liberation Sans, sans-serif" >DYBZ34-00</text>
<rect x="902.0" y="710.0" width="7.0" height="4.0" fill="#ffffff"/>
<rect x="916.0" y="710.0" width="11.0" height="4.0" fill="#ffffff"/>
<rect x="902.0" y="717.0" width="7.0" height="4.0" fill="#ffffff"/>
<rect x="916.0" y="717.0" width="11.0" height="4.0" fill="#ffffff"/>
<rect x="902.0" y="724.0" width="7.0" height="4.0" fill="#ffffff"/>
<rect x="957.0" y="710.0" width="7.0" height="4.0" fill="#ffffff"/>
<rect x="957.0" y="697.0" width="7.0" height="4.0" fill="#ffffff"/>
<rect x="957.0" y="703.0" width="7.0" height="4.0" fill="#ffffff"/>
<rect x="969.0" y="696.0" width="10.0" height="4.0" fill="#ffffff"/>
<rect x="969.0" y="703.0" width="5.0" height="4.0" fill="#ffffff"/>
<rect x="984.0" y="696.0" width="5.0" height="4.0" fill="#ffffff"/>
<rect x="992.0" y="696.0" width="11.0" height="4.0" fill="#ffffff"/>
<text x="905.0" y="592.1" fill="#ffffff" font-size="5.5" text-anchor="middle" font-family="Liberation Sans, sans-serif" font-weight="bold">15</text>
<rect x="926.0" y="588.0" width="12.7" height="4.5" fill="#ffffff"/>
<text x="960.5" y="592.1" fill="#ffffff" font-size="5.5" text-anchor="middle" font-family="Liberation Sans, sans-serif" font-weight="bold">2</text>
<text x="973.0" y="592.1" fill="#ffffff" font-size="5.5" text-anchor="middle" font-family="Liberation Sans, sans-serif" font-weight="bold">45</text>
<text x="905.0" y="599.1" fill="#ffffff" font-size="5.5" text-anchor="middle" font-family="Liberation Sans, sans-serif" font-weight="bold">14</text>
<rect x="923.7" y="595.0" width="16.9" height="4.5" fill="#ffffff"/>
<text x="960.5" y="599.1" fill="#ffffff" font-size="5.5" text-anchor="middle" font-family="Liberation Sans, sans-serif" font-weight="bold">4</text>
<text x="973.0" y="599.1" fill="#ffffff" font-size="5.5" text-anchor="middle" font-family="Liberation Sans, sans-serif" font-weight="bold">45</text>
<rect x="991.0" y="595.0" width="9.0" height="4.5" fill="#ffffff"/>
<text x="905.0" y="606.1" fill="#ffffff" font-size="5.5" text-anchor="middle" font-family="Liberation Sans, sans-serif" font-weight="bold">13</text>
<rect x="930.0" y="602.0" width="5.0" height="4.5" fill="#ffffff"/>
<text x="960.5" y="606.1" fill="#ffffff" font-size="5.5" text-anchor="middle" font-family="Liberation Sans, sans-serif" font-weight="bold">8</text>
<text x="973.0" y="606.1" fill="#ffffff" font-size="5.5" text-anchor="middle" font-family="Liberation Sans, sans-serif" font-weight="bold">45</text>
<rect x="991.0" y="602.0" width="9.0" height="4.5" fill="#ffffff"/>
<text x="905.0" y="613.1" fill="#ffffff" font-size="5.5" text-anchor="middle" font-family="Liberation Sans, sans-serif" font-weight="bold">12</text>
<rect x="926.0" y="609.0" width="12.0" height="4.5" fill="#ffffff"/>
<text x="960.5" y="613.1" fill="#ffffff" font-size="5.5" text-anchor="middle" font-family="Liberation Sans, sans-serif" font-weight="bold">8</text>
<rect x="966.0" y="608.5" width="14.0" height="5.0" fill="#ffffff"/>
<text x="905.0" y="620.1" fill="#ffffff" font-size="5.5" text-anchor="middle" font-family="Liberation Sans, sans-serif" font-weight="bold">11</text>
<rect x="926.0" y="616.0" width="12.0" height="4.5" fill="#ffffff"/>
<text x="960.5" y="620.1" fill="#ffffff" font-size="5.5" text-anchor="middle" font-family="Liberation Sans, sans-serif" font-weight="bold">16</text>
<text x="973.0" y="620.1" fill="#ffffff" font-size="5.5" text-anchor="middle" font-family="Liberation Sans, sans-serif" font-weight="bold">45</text>
<rect x="991.0" y="616.0" width="9.0" height="4.5" fill="#ffffff"/>
<text x="905.0" y="627.1" fill="#ffffff" font-size="5.5" text-anchor="middle" font-family="Liberation Sans, sans-serif" font-weight="bold">10</text>
<rect x="926.0" y="623.0" width="12.0" height="4.5" fill="#ffffff"/>
<text x="960.5" y="627.1" fill="#ffffff" font-size="5.5" text-anchor="middle" font-family="Liberation Sans, sans-serif" font-weight="bold">2</text>
<text x="973.0" y="627.1" fill="#ffffff" font-size="5.5" text-anchor="middle" font-family="Liberation Sans, sans-serif" font-weight="bold">45</text>
<rect x="991.0" y="623.0" width="9.0" height="4.5" fill="#ffffff"/>
<text x="905.0" y="633.1" fill="#ffffff" font-size="5.5" text-anchor="middle" font-family="Liberation Sans, sans-serif" font-weight="bold">9</text>
<rect x="926.0" y="629.0" width="12.0" height="4.5" fill="#ffffff"/>
<text x="960.5" y="633.1" fill="#ffffff" font-size="5.5" text-anchor="middle" font-family="Liberation Sans, sans-serif" font-weight="bold">16</text>
<text x="973.0" y="633.1" fill="#ffffff" font-size="5.5" text-anchor="middle" font-family="Liberation Sans, sans-serif" font-weight="bold">A3</text>
<text x="905.0" y="640.1" fill="#ffffff" font-size="5.5" text-anchor="middle" font-family="Liberation Sans, sans-serif" font-weight="bold">8</text>
<rect x="930.0" y="636.0" width="5.0" height="4.5" fill="#ffffff"/>
<text x="960.5" y="640.1" fill="#ffffff" font-size="5.5" text-anchor="middle" font-family="Liberation Sans, sans-serif" font-weight="bold">8</text>
<text x="973.0" y="640.1" fill="#ffffff" font-size="5.5" text-anchor="middle" font-family="Liberation Sans, sans-serif" font-weight="bold">45</text>
<rect x="991.0" y="636.0" width="9.0" height="4.5" fill="#ffffff"/>
<text x="905.0" y="647.1" fill="#ffffff" font-size="5.5" text-anchor="middle" font-family="Liberation Sans, sans-serif" font-weight="bold">7</text>
<rect x="923.0" y="643.0" width="5.0" height="4.5" fill="#ffffff"/>
<rect x="930.0" y="643.0" width="5.0" height="4.5" fill="#ffffff"/>
<rect x="937.0" y="643.0" width="5.0" height="4.5" fill="#ffffff"/>
<text x="960.5" y="647.1" fill="#ffffff" font-size="5.5" text-anchor="middle" font-family="Liberation Sans, sans-serif" font-weight="bold">8</text>
<text x="973.0" y="647.1" fill="#ffffff" font-size="5.5" text-anchor="middle" font-family="Liberation Sans, sans-serif" font-weight="bold">A3</text>
<rect x="984.0" y="643.0" width="23.0" height="4.5" fill="#ffffff"/>
<text x="905.0" y="654.1" fill="#ffffff" font-size="5.5" text-anchor="middle" font-family="Liberation Sans, sans-serif" font-weight="bold">6</text>
<rect x="925.0" y="650.0" width="5.0" height="4.5" fill="#ffffff"/>
<rect x="935.0" y="650.0" width="5.0" height="4.5" fill="#ffffff"/>
<text x="960.5" y="654.1" fill="#ffffff" font-size="5.5" text-anchor="middle" font-family="Liberation Sans, sans-serif" font-weight="bold">2</text>
<text x="973.0" y="654.1" fill="#ffffff" font-size="5.5" text-anchor="middle" font-family="Liberation Sans, sans-serif" font-weight="bold">45</text>
<rect x="987.0" y="650.0" width="17.0" height="4.5" fill="#ffffff"/>
<text x="905.0" y="660.1" fill="#ffffff" font-size="5.5" text-anchor="middle" font-family="Liberation Sans, sans-serif" font-weight="bold">5</text>
<rect x="924.0" y="656.0" width="17.0" height="4.5" fill="#ffffff"/>
<text x="960.5" y="660.1" fill="#ffffff" font-size="5.5" text-anchor="middle" font-family="Liberation Sans, sans-serif" font-weight="bold">20</text>
<text x="973.0" y="660.1" fill="#ffffff" font-size="5.5" text-anchor="middle" font-family="Liberation Sans, sans-serif" font-weight="bold">45</text>
<text x="905.0" y="667.1" fill="#ffffff" font-size="5.5" text-anchor="middle" font-family="Liberation Sans, sans-serif" font-weight="bold">4</text>
<rect x="923.0" y="663.0" width="17.0" height="4.5" fill="#ffffff"/>
<text x="960.5" y="667.1" fill="#ffffff" font-size="5.5" text-anchor="middle" font-family="Liberation Sans, sans-serif" font-weight="bold">8</text>
<text x="973.0" y="667.1" fill="#ffffff" font-size="5.5" text-anchor="middle" font-family="Liberation Sans, sans-serif" font-weight="bold">45</text>
<rect x="982.0" y="663.0" width="26.0" height="4.5" fill="#ffffff"/>
<text x="905.0" y="674.1" fill="#ffffff" font-size="5.5" text-anchor="middle" font-family="Liberation Sans, sans-serif" font-weight="bold">3</text>
<rect x="925.0" y="670.0" width="5.0" height="4.5" fill="#ffffff"/>
<rect x="935.0" y="670.0" width="5.0" height="4.5" fill="#ffffff"/>
<text x="960.5" y="674.1" fill="#ffffff" font-size="5.5" text-anchor="middle" font-family="Liberation Sans, sans-serif" font-weight="bold">1</text>
<text x="973.0" y="674.1" fill="#ffffff" font-size="5.5" text-anchor="middle" font-family="Liberation Sans, sans-serif" font-weight="bold">45</text>
<rect x="982.0" y="670.0" width="26.0" height="4.5" fill="#ffffff"/>
<text x="905.0" y="681.1" fill="#ffffff" font-size="5.5" text-anchor="middle" font-family="Liberation Sans, sans-serif" font-weight="bold">2</text>
<rect x="923.0" y="677.0" width="5.0" height="4.5" fill="#ffffff"/>
<rect x="930.0" y="677.0" width="5.0" height="4.5" fill="#ffffff"/>
<rect x="937.0" y="677.0" width="5.0" height="4.5" fill="#ffffff"/>
<text x="960.5" y="681.1" fill="#ffffff" font-size="5.5" text-anchor="middle" font-family="Liberation Sans, sans-serif" font-weight="bold">2</text>
<text x="973.0" y="681.1" fill="#ffffff" font-size="5.5" text-anchor="middle" font-family="Liberation Sans, sans-serif" font-weight="bold">45</text>
<rect x="982.0" y="677.0" width="26.0" height="4.5" fill="#ffffff"/>
<text x="905.0" y="688.1" fill="#ffffff" font-size="5.5" text-anchor="middle" font-family="Liberation Sans, sans-serif" font-weight="bold">1</text>
<rect x="923.0" y="684.0" width="5.0" height="4.5" fill="#ffffff"/>
<rect x="930.0" y="684.0" width="5.0" height="4.5" fill="#ffffff"/>
<rect x="937.0" y="684.0" width="5.0" height="4.5" fill="#ffffff"/>
<text x="960.5" y="688.1" fill="#ffffff" font-size="5.5" text-anchor="middle" font-family="Liberation Sans, sans-serif" font-weight="bold">2</text>
<text x="973.0" y="688.1" fill="#ffffff" font-size="5.5" text-anchor="middle" font-family="Liberation Sans, sans-serif" font-weight="bold">45</text>
<rect x="982.0" y="684.0" width="26.0" height="4.5" fill="#ffffff"/>
<rect x="901.0" y="691.0" width="8.0" height="4.0" fill="#ffffff"/>
<rect x="928.0" y="691.0" width="9.0" height="4.0" fill="#ffffff"/>
<rect x="957.0" y="691.0" width="7.0" height="4.0" fill="#ffffff"/>
<rect x="968.0" y="691.0" width="10.0" height="4.0" fill="#ffffff"/>
<rect x="991.0" y="691.0" width="8.0" height="4.0" fill="#ffffff"/>
</svg>
</body></html>
